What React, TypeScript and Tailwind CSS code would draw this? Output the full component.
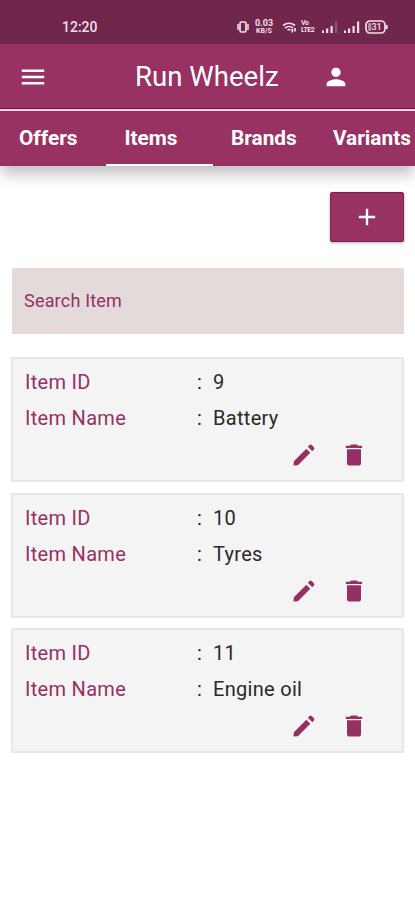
const ICONS = {
  menu: "M3 18h18v-2H3v2zm0-5h18v-2H3v2zm0-7v2h18V6H3z",
  person: "M12 12c2.21 0 4-1.79 4-4s-1.79-4-4-4-4 1.79-4 4 1.79 4 4 4zm0 2c-2.67 0-8 1.34-8 4v2h16v-2c0-2.66-5.33-4-8-4z",
  add: "M19 13h-6v6h-2v-6H5v-2h6V5h2v6h6v2z",
  edit: "M3.3 17.3 3 20.3Q3 21 3.7 21L6.8 20.7 17.4 10 14 6.6 3.3 17.3zM20.5 7.3Q21.3 6.3 20.5 5.4L18.6 3.5Q17.7 2.7 16.7 3.5L15.3 4.9 19.1 8.7 20.5 7.3z",
  trash: "M6 19c0 1.1.9 2 2 2h8c1.1 0 2-.9 2-2V7H6v12zM19 4h-3.5l-1-1h-5l-1 1H5v2h14V4z",
};

function Icon({ name, className = "size-7" }: { name: keyof typeof ICONS; className?: string }) {
  return (
    <svg viewBox="0 0 24 24" fill="currentColor" className={`shrink-0 ${className}`}>
      <path d={ICONS[name]} />
    </svg>
  );
}

function Signal({ weak = false }: { weak?: boolean }) {
  return (
    <svg viewBox="0 0 16 12" fill="currentColor" className="h-3 w-4 shrink-0">
      <rect x="0" y="9.5" width="2" height="2.5" />
      <rect x="4" y="7.5" width="2.2" height="4.5" />
      <rect x="8.5" y="5" width="2.2" height="7" />
      <rect x="13" y="0.5" width="2.2" height="11.5" opacity={weak ? 0.25 : 1} />
    </svg>
  );
}

function StatusBar() {
  return (
    <div className="flex h-11 items-center bg-[#71264c] pt-[10px] pl-[62px] text-[#f3dfe9]">
      <span className="w-[174px] text-[14px] font-medium">12:20</span>
      <svg viewBox="0 0 14 12" fill="none" stroke="currentColor" strokeWidth="1.7" className="h-3 w-3.5">
        <rect x="4" y="1" width="6" height="10" rx="1.5" />
        <path d="M2 3v6M12 3v6" strokeWidth="1.5" />
      </svg>
      <div className="ml-1 flex w-5 flex-col items-center font-bold">
        <span className="h-[7px] text-[9px] leading-[6px]">0.03</span>
        <span className="h-[7px] text-[7px] leading-[8px]">KB/S</span>
      </div>
      <svg viewBox="0 0 15 12" fill="none" stroke="currentColor" strokeWidth="1.7" className="ml-[8px] h-3 w-[15px]">
        <path d="M1 4.5Q7 0 13 4.5M3 7Q7 4 11 7M5.5 9q1.5-1 3 0" />
        <path d="M10.3 8v3.5M13 7v3.5" />
      </svg>
      <div className="ml-1 flex w-[14px] flex-col text-[7px] font-bold tracking-[-0.5px]">
        <span className="h-[7px] leading-[7px]">Vo</span>
        <span className="h-[7px] leading-[7px]">LTE2</span>
      </div>
      <div className="ml-[7px] flex items-center gap-[6px]">
        <Signal weak />
        <Signal />
      </div>
      <svg viewBox="0 0 23 14" fill="none" stroke="currentColor" strokeWidth="1.7" className="ml-[5px] h-3.5 w-[23px]">
        <rect x="1" y="1" width="19" height="12" rx="4" />
        <path d="M21.8 5v4" strokeWidth="1.8" />
        <rect x="3.2" y="3.2" width="3" height="7.6" fill="currentColor" stroke="none" opacity=".6" />
        <text x="11.5" y="10.2" textAnchor="middle" fontSize="9" fontWeight="500" fill="currentColor" stroke="none">31</text>
      </svg>
    </div>
  );
}

function Field({ label, value }: { label: string; value: string }) {
  return (
    <div className="flex h-9 items-center text-[20px] tracking-[0.3px] text-[#292929]">
      <span className="w-[172px] text-[#963064]">{label}</span>
      <span className="w-4">:</span>
      <span>{value}</span>
    </div>
  );
}

function ItemCard({ id, name }: { id: string; name: string }) {
  return (
    <div className="h-[125px] border-2 border-[#e7e7e7] bg-[#f4f4f4] pt-[5px] pl-3">
      <Field label="Item ID" value={id} />
      <Field label="Item Name" value={name} />
      <div className="mt-[5px] mr-[34px] flex justify-end gap-[22.5px] text-[#963064]">
        <Icon name="edit" />
        <Icon name="trash" />
      </div>
    </div>
  );
}

export default function App() {
  return (
    <div className="h-[900px] w-[415px] overflow-hidden bg-white font-['Roboto',sans-serif]">
      <StatusBar />
      <header className="relative bg-[#983263] text-white shadow-[0_9px_14px_-1px_rgba(0,0,0,0.25)]">
        <div className="flex h-[65px] items-center border-b border-[#85004d] pt-px pl-[18px]">
          <Icon name="menu" className="size-[30px]" />
          <h1 className="ml-[87px] w-[187px] pt-px text-[27.6px]">Run Wheelz</h1>
          <Icon name="person" />
        </div>
        <nav className="flex h-[57px] border-t-2 border-[#efd9e4] text-[20.8px] font-bold leading-[55px]">
          <span className="w-[106px] pl-[19px]">Offers</span>
          <span className="w-[107px] border-b-2 border-white pl-[18.5px]">Items</span>
          <span className="w-[120px] pl-[18px]">Brands</span>
          <span>Variants</span>
        </nav>
      </header>
      <main className="px-[11px] pt-[26px]">
        <button className="ml-auto flex h-[50px] w-[74px] items-center justify-center rounded-[2px] border border-[#8b1658] bg-[#983263] text-white shadow-[0_1px_3px_rgba(0,0,0,0.3)]">
          <Icon name="add" />
        </button>
        <div className="mt-[26px] ml-px flex h-[66px] items-center bg-[#e5dada] pb-px pl-3 text-[18px] tracking-[0.2px] text-[#963064]">Search Item</div>
        <div className="mt-[23px] flex flex-col gap-[10.7px]">
          <ItemCard id="9" name="Battery" />
          <ItemCard id="10" name="Tyres" />
          <ItemCard id="11" name="Engine oil" />
        </div>
      </main>
    </div>
  );
}
